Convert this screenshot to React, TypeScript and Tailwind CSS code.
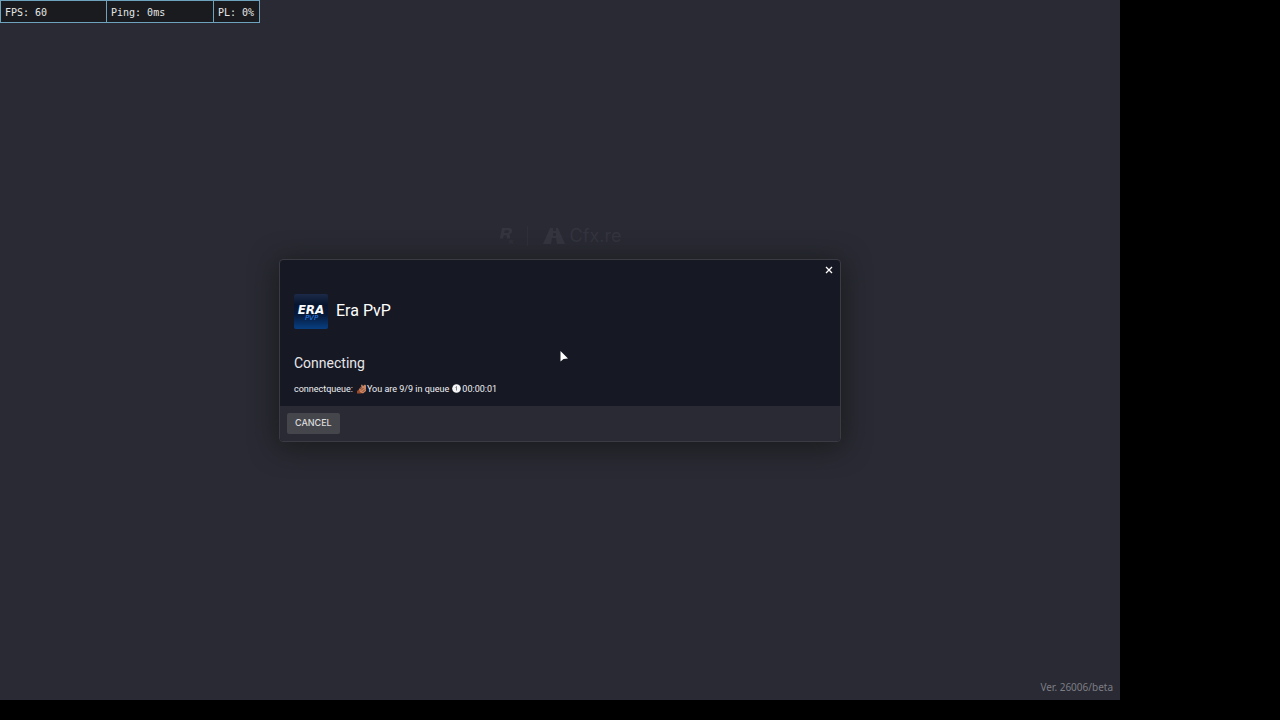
import React from "react";

function StatsBar() {
  return (
    <dl className="absolute left-0 top-0 flex h-[23px] divide-x divide-[#6fa3bd] border border-[#6fa3bd] bg-[#191b1e] font-['DejaVu_Sans_Mono',monospace] text-[10px] leading-[23px] text-[#e6e6e6]">
      <div className="flex w-[106px] gap-1.5 pl-1">
        <dt>FPS:</dt>
        <dd>60</dd>
      </div>
      <div className="flex w-[107px] gap-1.5 pl-1">
        <dt>Ping:</dt>
        <dd>0ms</dd>
      </div>
      <div className="flex w-[45px] gap-1.5 pl-1">
        <dt>PL:</dt>
        <dd>0%</dd>
      </div>
    </dl>
  );
}

function BackdropBrand() {
  return (
    <div className="absolute inset-x-0 top-[226px] flex items-center justify-center text-[#353540]">
      <svg width="18" height="20" viewBox="0 0 18 20" aria-hidden="true">
        <path
          d="M3 2h6.5c3 0 4 1.4 3.5 3.5-.4 1.7-1.4 2.6-3 3 1.2.6 1.3 1.6 1 4H7.600c.3-2 .4-3.200-1-3.200H4.800L4 12.500H.8zm2.800 2.300-.6 2.800h2.600c1.200 0 2-.4 2.200-1.500.2-1-.4-1.300-1.500-1.300z"
          fill="currentColor"
        />
        <path d="m12 12 .8 2.200H16l-2.200 1.800.8 2.600-2.400-1.500-2.600 1.500 1-2.600L9 14.200h2.400z" fill="#30303a" />
      </svg>
      <span className="mx-2.5 h-5 w-px bg-[#30303a]" />
      <svg width="24" height="20" viewBox="0 0 24 20" className="ml-1" aria-hidden="true">
        <path
          d="M8 2h3v3h3V2h2l7 16h-8l-1-6h-4l-1 6H1zM11 7v3h3V7z"
          fillRule="evenodd"
          fill="currentColor"
        />
      </svg>
      <span className="ml-1 font-['Inter',sans-serif] text-[18px] leading-5 text-[#34343f]">Cfx.re</span>
    </div>
  );
}

function ServerIcon() {
  return (
    <svg width="34" height="35" viewBox="0 0 34 35" role="img" aria-label="Era PvP logo">
      <defs>
        <linearGradient id="era-bg" x1="0" y1="0" x2="0" y2="1">
          <stop offset="0" stopColor="#1c2a49" />
          <stop offset="0.3" stopColor="#07152e" />
          <stop offset="0.6" stopColor="#071a3b" />
          <stop offset="1" stopColor="#073f82" />
        </linearGradient>
      </defs>
      <rect width="34" height="35" rx="2" fill="url(#era-bg)" />
      <text
        x="17"
        y="20"
        textAnchor="middle"
        fontFamily="DejaVu Sans, sans-serif"
        fontSize="12"
        fontWeight="700"
        fontStyle="italic"
        fill="#f8fbff"
      >
        ERA
      </text>
      <text
        x="17.500"
        y="26"
        textAnchor="middle"
        fontFamily="DejaVu Sans, sans-serif"
        fontSize="7"
        fontStyle="italic"
        fill="#2b7de6"
      >
        PVP
      </text>
    </svg>
  );
}

function HandIcon() {
  return (
    <svg width="9" height="10" viewBox="0 0 9 10" className="ml-1 mr-px shrink-0" aria-hidden="true">
      <path d="M0 9.500V7l2.500-2L4 6l1.500 2-1 1.500z" fill="#9a4a2b" />
      <path d="M2 5 4.500 2.500 4 1l1-.5L6 2l2-1.500 1 1V7L6 9.500 3 8z" fill="#c98664" />
      <path d="m3 5 2-1.500M4 6.500 6.500 4M5.500 8 8 5.500" stroke="#6d3324" strokeWidth="0.8" />
    </svg>
  );
}

function ClockIcon() {
  return (
    <svg width="9" height="9" viewBox="0 0 9 9" className="ml-[3px] mr-px shrink-0" aria-hidden="true">
      <circle cx="4.500" cy="4.500" r="4.300" fill="#f5f5f5" />
      <path d="M4.500 2.200v4.300M4.500 4.500 3.500 3.500" stroke="#777b85" strokeWidth="0.9" />
    </svg>
  );
}

function Pointer() {
  return (
    <svg
      width="10"
      height="14"
      viewBox="0 0 10 14"
      className="pointer-events-none absolute left-1/2 top-1/2 z-10"
      aria-hidden="true"
    >
      <path d="M.5 1v10.500L3.500 9l4.500-.5z" fill="#fff" />
    </svg>
  );
}

function ConnectDialog() {
  return (
    <section
      role="dialog"
      aria-labelledby="server-name"
      className="relative w-[calc(50%+2px)] overflow-hidden rounded-[4px] border border-[#3b3c43] bg-[#161824] shadow-[0_4px_28px_rgba(20,22,20,0.8)]"
    >
      <button
        type="button"
        aria-label="Close"
        className="absolute right-1 top-[3px] grid size-3.5 place-items-center text-white"
      >
        <svg width="8" height="8" viewBox="0 0 8 8" aria-hidden="true">
          <path d="m1 1 6 6M7 1 1 7" stroke="currentColor" strokeWidth="1.300" />
        </svg>
      </button>
      <div className="px-3.5 pb-[9px] pt-[34px]">
        <header className="flex items-center gap-2">
          <ServerIcon />
          <h1 id="server-name" className="text-[16px] leading-6 text-white">
            Era PvP
          </h1>
        </header>
        <h2 className="mt-6 text-[14px] leading-5 text-[#e6e6e8]">Connecting</h2>
        <p className="mt-2 flex items-center text-[9px] leading-4 text-[#f0f0f2]">
          connectqueue:
          <HandIcon />
          You are 9/9 in queue
          <ClockIcon />
          00:00:01
        </p>
      </div>
      <footer className="bg-[#292a33] p-[7px]">
        <button
          type="button"
          className="block h-[21px] rounded-[2px] bg-[#45464b] px-2 font-['Inter',sans-serif] text-[9px] font-medium leading-5 text-[#dcdcde]"
        >
          CANCEL
        </button>
      </footer>
    </section>
  );
}

export default function App() {
  return (
    <div className="flex min-h-screen bg-black pb-5 pr-40 font-['Roboto',sans-serif]">
      <main className="relative flex flex-1 items-center justify-center overflow-hidden bg-[#292a33]">
        <BackdropBrand />
        <ConnectDialog />
        <StatsBar />
        <Pointer />
        <p className="absolute bottom-[5px] right-[7px] font-['Noto_Sans',sans-serif] text-[10px] leading-4 text-[#7d7d84]">
          Ver. 26006/beta
        </p>
      </main>
    </div>
  );
}
